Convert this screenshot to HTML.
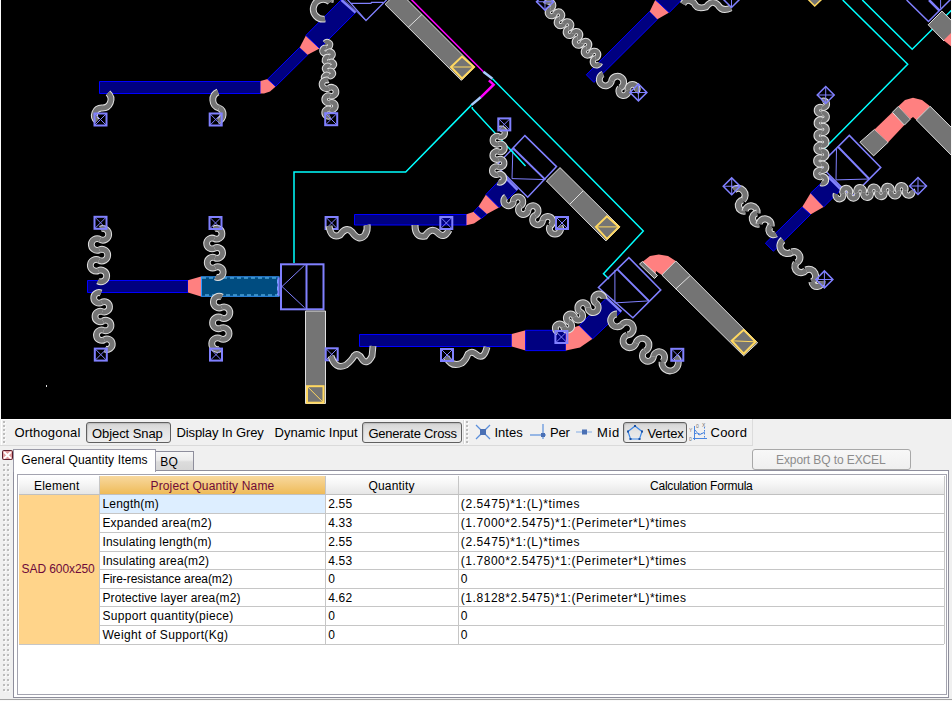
<!DOCTYPE html>
<html><head><meta charset="utf-8">
<style>
*{margin:0;padding:0;box-sizing:border-box}
html,body{width:952px;height:701px;overflow:hidden;background:#f0f0f0;font-family:"Liberation Sans",sans-serif;color:#000}
.a{position:absolute}
#cad{position:absolute;left:1px;top:0;width:950px;height:419px;background:#000;overflow:hidden}
.btn{position:absolute;border:1px solid #606060;border-radius:3px;background:linear-gradient(#d4d4d4,#e4e4e4 45%,#eeeeee);box-shadow:inset 1px 1px 1px rgba(0,0,0,0.12)}
.dot{position:absolute;width:2px;height:2px;background:#bcbcbc;box-shadow:1px 1px 0 #fafafa}
.th{position:absolute;background:linear-gradient(#ffffff,#f4f4f4 50%,#e6e6e6)}
</style></head><body>
<div id="cad"><svg width="950" height="419" viewBox="1 0 950 419"><polygon points="99.5,81.5 260.5,81.5 260.5,93.5 99.5,93.5" fill="#000080" stroke="#0000ff" stroke-width="1"/><polygon points="260.5,81.0 267.7,79.1 275.7,86.4 270.0,91.5 264.0,93.5 260.5,93.5" fill="#ff8080"/><polygon points="267.7,79.1 299.7,47.4 307.6,54.8 275.7,86.4" fill="#000080" stroke="#0000ff" stroke-width="1"/><polygon points="299.7,47.4 305.9,35.4 319.6,48.5 307.6,54.8" fill="#ff8080"/><polygon points="305.9,35.4 341.5,-0.5 355.5,12.6 319.6,48.5" fill="#000080" stroke="#0000ff" stroke-width="1"/><polyline points="341.5,0.0 355.5,12.6" fill="none" stroke="#8080ff" stroke-width="2.5"/><polyline points="346.5,-1.5 366.0,20.5 387.5,-1.0" fill="none" stroke="#8080ff" stroke-width="1.3"/><polyline points="344.0,-0.5 364.5,19.5" fill="none" stroke="#8080ff" stroke-width="0.8"/><polyline points="351.0,3.3 371.0,3.3 371.5,2.3 383.5,2.3" fill="none" stroke="#8080ff" stroke-width="1.2"/><g fill="none" stroke-linecap="butt"><path d="M108.0,93.0 A8.56,8.56 0 0 1 102.0,108.0" stroke="#e0e0e0" stroke-width="6.8"/><path d="M108.0,93.0 A8.56,8.56 0 0 1 102.0,108.0" stroke="#747474" stroke-width="4.8"/><path d="M102.0,108.0 A7.38,7.38 0 0 0 97.0,121.0" stroke="#e0e0e0" stroke-width="6.8"/><path d="M102.0,108.0 A7.38,7.38 0 0 0 97.0,121.0" stroke="#747474" stroke-width="4.8"/></g><g fill="none" stroke-linecap="butt"><path d="M218.0,92.0 A8.50,8.50 0 0 0 219.0,108.0" stroke="#e0e0e0" stroke-width="6.8"/><path d="M218.0,92.0 A8.50,8.50 0 0 0 219.0,108.0" stroke="#747474" stroke-width="4.8"/><path d="M219.0,108.0 A6.91,6.91 0 0 1 218.0,121.0" stroke="#e0e0e0" stroke-width="6.8"/><path d="M219.0,108.0 A6.91,6.91 0 0 1 218.0,121.0" stroke="#747474" stroke-width="4.8"/></g><g fill="none" stroke-linecap="butt"><path d="M325.0,43.0 A2.95,2.95 0 1 1 326.2,47.8" stroke="#e0e0e0" stroke-width="6.2"/><path d="M325.0,43.0 A2.95,2.95 0 1 1 326.2,47.8" stroke="#747474" stroke-width="4.2"/><path d="M326.2,47.8 A2.95,2.95 0 1 0 327.5,52.5" stroke="#e0e0e0" stroke-width="6.2"/><path d="M326.2,47.8 A2.95,2.95 0 1 0 327.5,52.5" stroke="#747474" stroke-width="4.2"/><path d="M327.5,52.5 A2.95,2.95 0 1 1 328.8,57.2" stroke="#e0e0e0" stroke-width="6.2"/><path d="M327.5,52.5 A2.95,2.95 0 1 1 328.8,57.2" stroke="#747474" stroke-width="4.2"/><path d="M328.8,57.2 A2.95,2.95 0 1 0 330.0,62.0" stroke="#e0e0e0" stroke-width="6.2"/><path d="M328.8,57.2 A2.95,2.95 0 1 0 330.0,62.0" stroke="#747474" stroke-width="4.2"/><path d="M330.0,62.0 A2.72,2.72 0 1 1 329.5,66.5" stroke="#e0e0e0" stroke-width="6.2"/><path d="M330.0,62.0 A2.72,2.72 0 1 1 329.5,66.5" stroke="#747474" stroke-width="4.2"/><path d="M329.5,66.5 A2.72,2.72 0 1 0 329.0,71.0" stroke="#e0e0e0" stroke-width="6.2"/><path d="M329.5,66.5 A2.72,2.72 0 1 0 329.0,71.0" stroke="#747474" stroke-width="4.2"/><path d="M329.0,71.0 A2.72,2.72 0 1 1 328.5,75.5" stroke="#e0e0e0" stroke-width="6.2"/><path d="M329.0,71.0 A2.72,2.72 0 1 1 328.5,75.5" stroke="#747474" stroke-width="4.2"/><path d="M328.5,75.5 A2.72,2.72 0 1 0 328.0,80.0" stroke="#e0e0e0" stroke-width="6.2"/><path d="M328.5,75.5 A2.72,2.72 0 1 0 328.0,80.0" stroke="#747474" stroke-width="4.2"/></g><g fill="none" stroke-linecap="butt"><path d="M328.0,80.0 A4.51,4.51 0 1 0 329.0,88.0" stroke="#e0e0e0" stroke-width="6.6"/><path d="M328.0,80.0 A4.51,4.51 0 1 0 329.0,88.0" stroke="#747474" stroke-width="4.6"/><path d="M329.0,88.0 A4.51,4.51 0 1 1 330.0,96.0" stroke="#e0e0e0" stroke-width="6.6"/><path d="M329.0,88.0 A4.51,4.51 0 1 1 330.0,96.0" stroke="#747474" stroke-width="4.6"/><path d="M330.0,96.0 A3.73,3.73 0 1 0 330.0,102.7" stroke="#e0e0e0" stroke-width="6.6"/><path d="M330.0,96.0 A3.73,3.73 0 1 0 330.0,102.7" stroke="#747474" stroke-width="4.6"/><path d="M330.0,102.7 A3.73,3.73 0 1 1 330.0,109.3" stroke="#e0e0e0" stroke-width="6.6"/><path d="M330.0,102.7 A3.73,3.73 0 1 1 330.0,109.3" stroke="#747474" stroke-width="4.6"/><path d="M330.0,109.3 A3.73,3.73 0 1 0 330.0,116.0" stroke="#e0e0e0" stroke-width="6.6"/><path d="M330.0,109.3 A3.73,3.73 0 1 0 330.0,116.0" stroke="#747474" stroke-width="4.6"/></g><g fill="none" stroke-linecap="butt"><path d="M323.0,-6.0 A6.38,6.38 0 0 1 330.0,2.0" stroke="#e0e0e0" stroke-width="6.8"/><path d="M323.0,-6.0 A6.38,6.38 0 0 1 330.0,2.0" stroke="#747474" stroke-width="4.8"/></g><g fill="none" stroke-linecap="butt"><path d="M330.0,2.0 A9.92,9.92 0 1 0 325.0,19.0" stroke="#e0e0e0" stroke-width="6.8"/><path d="M330.0,2.0 A9.92,9.92 0 1 0 325.0,19.0" stroke="#747474" stroke-width="4.8"/></g><g transform="translate(100.5,119.5) rotate(0)"><rect x="-6.0" y="-6.0" width="12" height="12" fill="none" stroke="#8080ff" stroke-width="2"/><path d="M-6.0,-6.0 L6.0,6.0 M6.0,-6.0 L-6.0,6.0" stroke="#8080ff" stroke-width="1"/></g><g transform="translate(215.7,119.5) rotate(0)"><rect x="-6.0" y="-6.0" width="12" height="12" fill="none" stroke="#8080ff" stroke-width="2"/><path d="M-6.0,-6.0 L6.0,6.0 M6.0,-6.0 L-6.0,6.0" stroke="#8080ff" stroke-width="1"/></g><g transform="translate(331.2,119.2) rotate(0)"><rect x="-6.0" y="-6.0" width="12" height="12" fill="none" stroke="#8080ff" stroke-width="2"/><path d="M-6.0,-6.0 L6.0,6.0 M6.0,-6.0 L-6.0,6.0" stroke="#8080ff" stroke-width="1"/></g><polygon points="385.1,4.3 398.5,-9.0 474.5,67.0 461.3,80.4" fill="#747474" stroke="#e0e0e0" stroke-width="1"/><polyline points="408.2,27.4 421.9,14.5" fill="none" stroke="#e0e0e0" stroke-width="1"/><polygon points="451.0,67.0 462.0,56.5 474.0,67.0 462.0,78.5" fill="none" stroke="#ffd860" stroke-width="2"/><polyline points="451.0,67.0 474.0,67.0" fill="none" stroke="#ffd860" stroke-width="1"/><polyline points="410.8,-1.0 483.4,71.8" fill="none" stroke="#ff00ff" stroke-width="1.5"/><polyline points="483.4,71.8 492.5,78.8" fill="none" stroke="#a8ccff" stroke-width="2.5"/><polyline points="488.9,80.4 493.6,84.7 480.7,97.3" fill="none" stroke="#ff00ff" stroke-width="2.5"/><polyline points="480.7,97.3 471.3,105.1" fill="none" stroke="#a8ccff" stroke-width="2.5"/><polygon points="87.5,280.5 188.0,280.5 188.0,292.5 87.5,292.5" fill="#000080" stroke="#0000ff" stroke-width="1"/><polygon points="188.0,280.3 201.0,276.6 201.0,296.4 188.0,292.6" fill="#ff8080"/><rect x="201.5" y="276.8" width="77.5" height="19.5" fill="#004c80" stroke="#3399ff" stroke-width="1"/><polyline points="202,278 277.5,278 277.5,295 202,295" fill="none" stroke="#6cc8ff" stroke-width="1" stroke-dasharray="4,3"/><polyline points="278.5,277.5 278.5,296.0" fill="none" stroke="#8080ff" stroke-width="2"/><rect x="281" y="264.3" width="42.5" height="45" fill="none" stroke="#8080ff" stroke-width="2"/><polyline points="306.5,264.0 306.5,309.0" fill="none" stroke="#8080ff" stroke-width="2"/><polyline points="304.6,265.2 282.0,286.5 304.6,307.7" fill="none" stroke="#8080ff" stroke-width="1"/><polygon points="305.5,311.0 325.5,311.0 325.5,403.5 305.5,403.5" fill="#747474" stroke="#e0e0e0" stroke-width="1"/><rect x="307" y="386.2" width="16.5" height="16.5" fill="none" stroke="#ffd860" stroke-width="2"/><polyline points="307.0,386.2 323.5,402.7" fill="none" stroke="#ffd860" stroke-width="1"/><polyline points="294.0,263.0 294.0,172.0 405.7,172.0 471.3,105.1" fill="none" stroke="#00ffff" stroke-width="1.5"/><g fill="none" stroke-linecap="butt"><path d="M100.5,229.0 A5.83,5.83 0 1 1 100.0,239.4" stroke="#e0e0e0" stroke-width="6.8"/><path d="M100.5,229.0 A5.83,5.83 0 1 1 100.0,239.4" stroke="#747474" stroke-width="4.8"/><path d="M100.0,239.4 A5.83,5.83 0 1 0 99.5,249.8" stroke="#e0e0e0" stroke-width="6.8"/><path d="M100.0,239.4 A5.83,5.83 0 1 0 99.5,249.8" stroke="#747474" stroke-width="4.8"/><path d="M99.5,249.8 A5.83,5.83 0 1 1 99.0,260.2" stroke="#e0e0e0" stroke-width="6.8"/><path d="M99.5,249.8 A5.83,5.83 0 1 1 99.0,260.2" stroke="#747474" stroke-width="4.8"/><path d="M99.0,260.2 A5.83,5.83 0 1 0 98.5,270.6" stroke="#e0e0e0" stroke-width="6.8"/><path d="M99.0,260.2 A5.83,5.83 0 1 0 98.5,270.6" stroke="#747474" stroke-width="4.8"/><path d="M98.5,270.6 A5.83,5.83 0 1 1 98.0,281.0" stroke="#e0e0e0" stroke-width="6.8"/><path d="M98.5,270.6 A5.83,5.83 0 1 1 98.0,281.0" stroke="#747474" stroke-width="4.8"/></g><g fill="none" stroke-linecap="butt"><path d="M101.0,293.0 A5.24,5.24 0 1 0 101.7,302.3" stroke="#e0e0e0" stroke-width="6.8"/><path d="M101.0,293.0 A5.24,5.24 0 1 0 101.7,302.3" stroke="#747474" stroke-width="4.8"/><path d="M101.7,302.3 A5.24,5.24 0 1 1 102.3,311.7" stroke="#e0e0e0" stroke-width="6.8"/><path d="M101.7,302.3 A5.24,5.24 0 1 1 102.3,311.7" stroke="#747474" stroke-width="4.8"/><path d="M102.3,311.7 A5.24,5.24 0 1 0 103.0,321.0" stroke="#e0e0e0" stroke-width="6.8"/><path d="M102.3,311.7 A5.24,5.24 0 1 0 103.0,321.0" stroke="#747474" stroke-width="4.8"/><path d="M103.0,321.0 A5.24,5.24 0 1 1 103.7,330.3" stroke="#e0e0e0" stroke-width="6.8"/><path d="M103.0,321.0 A5.24,5.24 0 1 1 103.7,330.3" stroke="#747474" stroke-width="4.8"/><path d="M103.7,330.3 A5.24,5.24 0 1 0 104.3,339.7" stroke="#e0e0e0" stroke-width="6.8"/><path d="M103.7,330.3 A5.24,5.24 0 1 0 104.3,339.7" stroke="#747474" stroke-width="4.8"/><path d="M104.3,339.7 A5.24,5.24 0 1 1 105.0,349.0" stroke="#e0e0e0" stroke-width="6.8"/><path d="M104.3,339.7 A5.24,5.24 0 1 1 105.0,349.0" stroke="#747474" stroke-width="4.8"/></g><g fill="none" stroke-linecap="butt"><path d="M214.0,229.0 A5.38,5.38 0 1 1 214.3,238.6" stroke="#e0e0e0" stroke-width="6.8"/><path d="M214.0,229.0 A5.38,5.38 0 1 1 214.3,238.6" stroke="#747474" stroke-width="4.8"/><path d="M214.3,238.6 A5.38,5.38 0 1 0 214.6,248.2" stroke="#e0e0e0" stroke-width="6.8"/><path d="M214.3,238.6 A5.38,5.38 0 1 0 214.6,248.2" stroke="#747474" stroke-width="4.8"/><path d="M214.6,248.2 A5.38,5.38 0 1 1 214.9,257.8" stroke="#e0e0e0" stroke-width="6.8"/><path d="M214.6,248.2 A5.38,5.38 0 1 1 214.9,257.8" stroke="#747474" stroke-width="4.8"/><path d="M214.9,257.8 A5.38,5.38 0 1 0 215.2,267.4" stroke="#e0e0e0" stroke-width="6.8"/><path d="M214.9,257.8 A5.38,5.38 0 1 0 215.2,267.4" stroke="#747474" stroke-width="4.8"/><path d="M215.2,267.4 A5.38,5.38 0 1 1 215.5,277.0" stroke="#e0e0e0" stroke-width="6.8"/><path d="M215.2,267.4 A5.38,5.38 0 1 1 215.5,277.0" stroke="#747474" stroke-width="4.8"/></g><g fill="none" stroke-linecap="butt"><path d="M222.0,297.0 A5.83,5.83 0 1 0 221.6,307.4" stroke="#e0e0e0" stroke-width="6.8"/><path d="M222.0,297.0 A5.83,5.83 0 1 0 221.6,307.4" stroke="#747474" stroke-width="4.8"/><path d="M221.6,307.4 A5.83,5.83 0 1 1 221.2,317.8" stroke="#e0e0e0" stroke-width="6.8"/><path d="M221.6,307.4 A5.83,5.83 0 1 1 221.2,317.8" stroke="#747474" stroke-width="4.8"/><path d="M221.2,317.8 A5.83,5.83 0 1 0 220.8,328.2" stroke="#e0e0e0" stroke-width="6.8"/><path d="M221.2,317.8 A5.83,5.83 0 1 0 220.8,328.2" stroke="#747474" stroke-width="4.8"/><path d="M220.8,328.2 A5.83,5.83 0 1 1 220.4,338.6" stroke="#e0e0e0" stroke-width="6.8"/><path d="M220.8,328.2 A5.83,5.83 0 1 1 220.4,338.6" stroke="#747474" stroke-width="4.8"/><path d="M220.4,338.6 A5.83,5.83 0 1 0 220.0,349.0" stroke="#e0e0e0" stroke-width="6.8"/><path d="M220.4,338.6 A5.83,5.83 0 1 0 220.0,349.0" stroke="#747474" stroke-width="4.8"/></g><g transform="translate(100.5,222.8) rotate(0)"><rect x="-6.0" y="-6.0" width="12" height="12" fill="none" stroke="#8080ff" stroke-width="2"/><path d="M-6.0,-6.0 L6.0,6.0 M6.0,-6.0 L-6.0,6.0" stroke="#8080ff" stroke-width="1"/></g><g transform="translate(100.8,354.6) rotate(0)"><rect x="-6.0" y="-6.0" width="12" height="12" fill="none" stroke="#8080ff" stroke-width="2"/><path d="M-6.0,-6.0 L6.0,6.0 M6.0,-6.0 L-6.0,6.0" stroke="#8080ff" stroke-width="1"/></g><g transform="translate(215.5,223) rotate(0)"><rect x="-6.0" y="-6.0" width="12" height="12" fill="none" stroke="#8080ff" stroke-width="2"/><path d="M-6.0,-6.0 L6.0,6.0 M6.0,-6.0 L-6.0,6.0" stroke="#8080ff" stroke-width="1"/></g><g transform="translate(216,354.6) rotate(0)"><rect x="-6.0" y="-6.0" width="12" height="12" fill="none" stroke="#8080ff" stroke-width="2"/><path d="M-6.0,-6.0 L6.0,6.0 M6.0,-6.0 L-6.0,6.0" stroke="#8080ff" stroke-width="1"/></g><g transform="translate(331.6,223) rotate(0)"><rect x="-6.0" y="-6.0" width="12" height="12" fill="none" stroke="#8080ff" stroke-width="2"/><path d="M-6.0,-6.0 L6.0,6.0 M6.0,-6.0 L-6.0,6.0" stroke="#8080ff" stroke-width="1"/></g><g transform="translate(331.7,354.3) rotate(0)"><rect x="-6.0" y="-6.0" width="12" height="12" fill="none" stroke="#8080ff" stroke-width="2"/><path d="M-6.0,-6.0 L6.0,6.0 M6.0,-6.0 L-6.0,6.0" stroke="#8080ff" stroke-width="1"/></g><polygon points="354.5,214.5 466.5,214.5 466.5,225.0 354.5,225.0" fill="#000080" stroke="#0000ff" stroke-width="1"/><polygon points="466.5,214.2 473.9,211.7 481.3,218.5 474.0,223.5 466.5,225.3" fill="#ff8080"/><polygon points="473.9,211.7 478.5,206.5 486.9,213.9 481.3,218.5" fill="#000080" stroke="#0000ff" stroke-width="1"/><polygon points="478.5,206.5 486.0,194.4 499.0,207.4 486.9,213.9" fill="#ff8080"/><polygon points="486.0,194.4 503.6,175.9 517.5,189.8 499.0,207.4" fill="#000080" stroke="#0000ff" stroke-width="1"/><polyline points="503.6,175.9 517.5,189.8" fill="none" stroke="#8080ff" stroke-width="2.5"/><polygon points="524.9,135.6 556.5,166.6 527.7,197.2 496.2,165.7" fill="none" stroke="#8080ff" stroke-width="1.5"/><polyline points="512.9,148.0 545.3,179.6" fill="none" stroke="#8080ff" stroke-width="2"/><polyline points="512.9,149.0 512.0,178.6 545.3,179.6" fill="none" stroke="#8080ff" stroke-width="1"/><polygon points="546.4,181.0 560.0,167.6 619.9,226.9 605.9,240.9" fill="#747474" stroke="#e0e0e0" stroke-width="1"/><polyline points="570.0,204.0 583.0,191.0" fill="none" stroke="#e0e0e0" stroke-width="1"/><polygon points="595.9,226.9 606.9,216.3 618.9,226.9 606.9,238.9" fill="none" stroke="#ffd860" stroke-width="2"/><polyline points="595.9,226.9 618.9,226.9" fill="none" stroke="#ffd860" stroke-width="1"/><polyline points="492.5,78.8 643.3,231.0 634.0,241.0 603.5,273.8 609.0,279.0" fill="none" stroke="#00ffff" stroke-width="1.5"/><polyline points="472.3,107.0 472.3,108.5 525.5,166.0" fill="none" stroke="#00ffff" stroke-width="1.5"/><g fill="none" stroke-linecap="butt"><path d="M499.0,129.0 A4.17,4.17 0 1 1 498.9,136.6" stroke="#e0e0e0" stroke-width="6.4"/><path d="M499.0,129.0 A4.17,4.17 0 1 1 498.9,136.6" stroke="#747474" stroke-width="4.4"/><path d="M498.9,136.6 A4.17,4.17 0 1 0 498.7,144.1" stroke="#e0e0e0" stroke-width="6.4"/><path d="M498.9,136.6 A4.17,4.17 0 1 0 498.7,144.1" stroke="#747474" stroke-width="4.4"/><path d="M498.7,144.1 A4.17,4.17 0 1 1 498.6,151.7" stroke="#e0e0e0" stroke-width="6.4"/><path d="M498.7,144.1 A4.17,4.17 0 1 1 498.6,151.7" stroke="#747474" stroke-width="4.4"/><path d="M498.6,151.7 A4.17,4.17 0 1 0 498.4,159.3" stroke="#e0e0e0" stroke-width="6.4"/><path d="M498.6,151.7 A4.17,4.17 0 1 0 498.4,159.3" stroke="#747474" stroke-width="4.4"/><path d="M498.4,159.3 A4.17,4.17 0 1 1 498.3,166.9" stroke="#e0e0e0" stroke-width="6.4"/><path d="M498.4,159.3 A4.17,4.17 0 1 1 498.3,166.9" stroke="#747474" stroke-width="4.4"/><path d="M498.3,166.9 A4.17,4.17 0 1 0 498.1,174.4" stroke="#e0e0e0" stroke-width="6.4"/><path d="M498.3,166.9 A4.17,4.17 0 1 0 498.1,174.4" stroke="#747474" stroke-width="4.4"/><path d="M498.1,174.4 A4.17,4.17 0 1 1 498.0,182.0" stroke="#e0e0e0" stroke-width="6.4"/><path d="M498.1,174.4 A4.17,4.17 0 1 1 498.0,182.0" stroke="#747474" stroke-width="4.4"/></g><g fill="none" stroke-linecap="butt"><path d="M506.0,197.0 A4.77,4.77 0 1 0 513.3,201.3" stroke="#e0e0e0" stroke-width="6.8"/><path d="M506.0,197.0 A4.77,4.77 0 1 0 513.3,201.3" stroke="#747474" stroke-width="4.8"/><path d="M513.3,201.3 A4.77,4.77 0 1 1 520.7,205.7" stroke="#e0e0e0" stroke-width="6.8"/><path d="M513.3,201.3 A4.77,4.77 0 1 1 520.7,205.7" stroke="#747474" stroke-width="4.8"/><path d="M520.7,205.7 A4.77,4.77 0 1 0 528.0,210.0" stroke="#e0e0e0" stroke-width="6.8"/><path d="M520.7,205.7 A4.77,4.77 0 1 0 528.0,210.0" stroke="#747474" stroke-width="4.8"/><path d="M528.0,210.0 A5.08,5.08 0 1 1 535.3,215.3" stroke="#e0e0e0" stroke-width="6.8"/><path d="M528.0,210.0 A5.08,5.08 0 1 1 535.3,215.3" stroke="#747474" stroke-width="4.8"/><path d="M535.3,215.3 A5.08,5.08 0 1 0 542.7,220.7" stroke="#e0e0e0" stroke-width="6.8"/><path d="M535.3,215.3 A5.08,5.08 0 1 0 542.7,220.7" stroke="#747474" stroke-width="4.8"/><path d="M542.7,220.7 A5.08,5.08 0 1 1 550.0,226.0" stroke="#e0e0e0" stroke-width="6.8"/><path d="M542.7,220.7 A5.08,5.08 0 1 1 550.0,226.0" stroke="#747474" stroke-width="4.8"/><path d="M550.0,226.0 A5.60,5.60 0 1 0 560.0,226.0" stroke="#e0e0e0" stroke-width="6.8"/><path d="M550.0,226.0 A5.60,5.60 0 1 0 560.0,226.0" stroke="#747474" stroke-width="4.8"/></g><path d="M329,226 Q331,239 340,235 Q346,226 352,232 Q359,242 365,235 Q368,230 367,225" fill="none" stroke="#e0e0e0" stroke-width="7"/><path d="M329,226 Q331,239 340,235 Q346,226 352,232 Q359,242 365,235 Q368,230 367,225" fill="none" stroke="#747474" stroke-width="5"/><path d="M415,225 Q415,238 425,236 Q431,227 437,232 Q444,240 449,230" fill="none" stroke="#e0e0e0" stroke-width="7"/><path d="M415,225 Q415,238 425,236 Q431,227 437,232 Q444,240 449,230" fill="none" stroke="#747474" stroke-width="5"/><g transform="translate(504.3,124.4) rotate(0)"><rect x="-6.0" y="-6.0" width="12" height="12" fill="none" stroke="#8080ff" stroke-width="2"/><path d="M-6.0,-6.0 L6.0,6.0 M6.0,-6.0 L-6.0,6.0" stroke="#8080ff" stroke-width="1"/></g><g transform="translate(562,223) rotate(0)"><rect x="-6.0" y="-6.0" width="12" height="12" fill="none" stroke="#8080ff" stroke-width="2"/><path d="M-6.0,-6.0 L6.0,6.0 M6.0,-6.0 L-6.0,6.0" stroke="#8080ff" stroke-width="1"/></g><g transform="translate(446.3,223) rotate(0)"><rect x="-6.0" y="-6.0" width="12" height="12" fill="none" stroke="#8080ff" stroke-width="2"/><path d="M-6.0,-6.0 L6.0,6.0 M6.0,-6.0 L-6.0,6.0" stroke="#8080ff" stroke-width="1"/></g><polygon points="359.5,334.5 511.8,334.5 511.8,346.5 359.5,346.5" fill="#000080" stroke="#0000ff" stroke-width="1"/><polygon points="511.8,334.1 525.6,330.3 525.6,350.6 511.8,346.5" fill="#ff8080"/><polygon points="525.6,330.3 565.9,330.3 565.9,350.6 525.6,350.6" fill="#000080" stroke="#0000ff" stroke-width="1"/><polygon points="565.9,330.3 579.4,325.6 592.6,338.8 580.0,347.5 565.9,350.6" fill="#ff8080"/><polygon points="579.4,325.6 606.6,297.9 621.3,311.6 592.6,338.8" fill="#000080" stroke="#0000ff" stroke-width="1"/><polyline points="606.6,297.9 621.3,311.6" fill="none" stroke="#8080ff" stroke-width="2.5"/><polygon points="628.9,257.6 660.8,289.9 632.9,317.8 598.4,287.5" fill="none" stroke="#8080ff" stroke-width="1.5"/><polyline points="616.9,268.9 648.9,300.9" fill="none" stroke="#8080ff" stroke-width="2"/><polyline points="614.9,270.0 614.9,302.9 648.9,300.9" fill="none" stroke="#8080ff" stroke-width="1"/><polygon points="641.0,263.0 650.0,256.0 658.8,254.4 668.0,256.0 675.8,261.0 661.8,275.0 656.0,271.0 654.9,277.9" fill="#ff8080"/><polygon points="639.5,264.0 642.5,261.5 657.5,275.5 654.5,278.5" fill="#747474" stroke="#e0e0e0" stroke-width="1"/><polygon points="675.8,261.0 757.6,342.8 743.7,355.8 661.8,275.0" fill="#747474" stroke="#e0e0e0" stroke-width="1"/><polyline points="689.8,276.0 675.8,288.9" fill="none" stroke="#e0e0e0" stroke-width="1"/><polygon points="731.7,340.8 743.7,329.8 755.6,341.8 743.7,353.8" fill="none" stroke="#ffd860" stroke-width="2"/><polyline points="731.7,340.8 755.6,341.8" fill="none" stroke="#ffd860" stroke-width="1"/><path d="M331,356 Q335,370 346,365 Q352,360 354,356 Q358,352 362,359 Q367,366 372,356 L373,346" fill="none" stroke="#e0e0e0" stroke-width="6.8"/><path d="M331,356 Q335,370 346,365 Q352,360 354,356 Q358,352 362,359 Q367,366 372,356 L373,346" fill="none" stroke="#747474" stroke-width="4.8"/><path d="M446,357 Q452,368 462,363 Q466,360 468,354 Q472,350 477,355 Q484,360 487,347" fill="none" stroke="#e0e0e0" stroke-width="6.8"/><path d="M446,357 Q452,368 462,363 Q466,360 468,354 Q472,350 477,355 Q484,360 487,347" fill="none" stroke="#747474" stroke-width="4.8"/><g fill="none" stroke-linecap="butt"><path d="M558.0,332.0 A4.16,4.16 0 1 1 563.5,327.0" stroke="#e0e0e0" stroke-width="6.8"/><path d="M558.0,332.0 A4.16,4.16 0 1 1 563.5,327.0" stroke="#747474" stroke-width="4.8"/><path d="M563.5,327.0 A4.16,4.16 0 1 0 569.0,322.0" stroke="#e0e0e0" stroke-width="6.8"/><path d="M563.5,327.0 A4.16,4.16 0 1 0 569.0,322.0" stroke="#747474" stroke-width="4.8"/><path d="M569.0,322.0 A4.16,4.16 0 1 1 574.5,317.0" stroke="#e0e0e0" stroke-width="6.8"/><path d="M569.0,322.0 A4.16,4.16 0 1 1 574.5,317.0" stroke="#747474" stroke-width="4.8"/><path d="M574.5,317.0 A4.16,4.16 0 1 0 580.0,312.0" stroke="#e0e0e0" stroke-width="6.8"/><path d="M574.5,317.0 A4.16,4.16 0 1 0 580.0,312.0" stroke="#747474" stroke-width="4.8"/><path d="M580.0,312.0 A5.10,5.10 0 1 1 588.0,307.7" stroke="#e0e0e0" stroke-width="6.8"/><path d="M580.0,312.0 A5.10,5.10 0 1 1 588.0,307.7" stroke="#747474" stroke-width="4.8"/><path d="M588.0,307.7 A5.10,5.10 0 1 0 596.0,303.3" stroke="#e0e0e0" stroke-width="6.8"/><path d="M588.0,307.7 A5.10,5.10 0 1 0 596.0,303.3" stroke="#747474" stroke-width="4.8"/><path d="M596.0,303.3 A5.10,5.10 0 1 1 604.0,299.0" stroke="#e0e0e0" stroke-width="6.8"/><path d="M596.0,303.3 A5.10,5.10 0 1 1 604.0,299.0" stroke="#747474" stroke-width="4.8"/></g><g fill="none" stroke-linecap="butt"><path d="M617.0,314.0 A6.40,6.40 0 1 0 622.0,324.5" stroke="#e0e0e0" stroke-width="6.8"/><path d="M617.0,314.0 A6.40,6.40 0 1 0 622.0,324.5" stroke="#747474" stroke-width="4.8"/><path d="M622.0,324.5 A6.40,6.40 0 1 1 627.0,335.0" stroke="#e0e0e0" stroke-width="6.8"/><path d="M622.0,324.5 A6.40,6.40 0 1 1 627.0,335.0" stroke="#747474" stroke-width="4.8"/><path d="M627.0,335.0 A6.62,6.62 0 1 0 636.0,343.0" stroke="#e0e0e0" stroke-width="6.8"/><path d="M627.0,335.0 A6.62,6.62 0 1 0 636.0,343.0" stroke="#747474" stroke-width="4.8"/><path d="M636.0,343.0 A6.62,6.62 0 1 1 645.0,351.0" stroke="#e0e0e0" stroke-width="6.8"/><path d="M636.0,343.0 A6.62,6.62 0 1 1 645.0,351.0" stroke="#747474" stroke-width="4.8"/><path d="M645.0,351.0 A5.57,5.57 0 1 0 653.5,356.5" stroke="#e0e0e0" stroke-width="6.8"/><path d="M645.0,351.0 A5.57,5.57 0 1 0 653.5,356.5" stroke="#747474" stroke-width="4.8"/><path d="M653.5,356.5 A5.57,5.57 0 1 1 662.0,362.0" stroke="#e0e0e0" stroke-width="6.8"/><path d="M653.5,356.5 A5.57,5.57 0 1 1 662.0,362.0" stroke="#747474" stroke-width="4.8"/><path d="M662.0,362.0 A8.18,8.18 0 1 0 676.0,357.0" stroke="#e0e0e0" stroke-width="6.8"/><path d="M662.0,362.0 A8.18,8.18 0 1 0 676.0,357.0" stroke="#747474" stroke-width="4.8"/></g><g transform="translate(561.4,337) rotate(0)"><rect x="-6.0" y="-6.0" width="12" height="12" fill="none" stroke="#8080ff" stroke-width="2"/><path d="M-6.0,-6.0 L6.0,6.0 M6.0,-6.0 L-6.0,6.0" stroke="#8080ff" stroke-width="1"/></g><g transform="translate(677.3,354.8) rotate(0)"><rect x="-6.0" y="-6.0" width="12" height="12" fill="none" stroke="#8080ff" stroke-width="2"/><path d="M-6.0,-6.0 L6.0,6.0 M6.0,-6.0 L-6.0,6.0" stroke="#8080ff" stroke-width="1"/></g><g transform="translate(447,355) rotate(0)"><rect x="-6.0" y="-6.0" width="12" height="12" fill="none" stroke="#8080ff" stroke-width="2"/><path d="M-6.0,-6.0 L6.0,6.0 M6.0,-6.0 L-6.0,6.0" stroke="#8080ff" stroke-width="1"/></g><polygon points="586.3,74.8 649.7,11.4 657.4,19.3 593.9,82.4" fill="#000080" stroke="#0000ff" stroke-width="1"/><polygon points="649.7,11.4 655.2,0.0 669.2,12.6 657.4,19.3" fill="#ff8080"/><polygon points="655.2,-0.5 682.0,-0.5 669.2,12.6" fill="#000080" stroke="#0000ff" stroke-width="1"/><g fill="none" stroke-linecap="butt"><path d="M546.0,4.0 A3.73,3.73 0 1 1 550.5,8.9" stroke="#e0e0e0" stroke-width="6.2"/><path d="M546.0,4.0 A3.73,3.73 0 1 1 550.5,8.9" stroke="#747474" stroke-width="4.2"/><path d="M550.5,8.9 A3.73,3.73 0 1 0 555.0,13.8" stroke="#e0e0e0" stroke-width="6.2"/><path d="M550.5,8.9 A3.73,3.73 0 1 0 555.0,13.8" stroke="#747474" stroke-width="4.2"/><path d="M555.0,13.8 A3.73,3.73 0 1 1 559.5,18.8" stroke="#e0e0e0" stroke-width="6.2"/><path d="M555.0,13.8 A3.73,3.73 0 1 1 559.5,18.8" stroke="#747474" stroke-width="4.2"/><path d="M559.5,18.8 A3.73,3.73 0 1 0 564.0,23.7" stroke="#e0e0e0" stroke-width="6.2"/><path d="M559.5,18.8 A3.73,3.73 0 1 0 564.0,23.7" stroke="#747474" stroke-width="4.2"/><path d="M564.0,23.7 A3.73,3.73 0 1 1 568.5,28.6" stroke="#e0e0e0" stroke-width="6.2"/><path d="M564.0,23.7 A3.73,3.73 0 1 1 568.5,28.6" stroke="#747474" stroke-width="4.2"/><path d="M568.5,28.6 A3.73,3.73 0 1 0 573.0,33.5" stroke="#e0e0e0" stroke-width="6.2"/><path d="M568.5,28.6 A3.73,3.73 0 1 0 573.0,33.5" stroke="#747474" stroke-width="4.2"/><path d="M573.0,33.5 A3.73,3.73 0 1 1 577.5,38.4" stroke="#e0e0e0" stroke-width="6.2"/><path d="M573.0,33.5 A3.73,3.73 0 1 1 577.5,38.4" stroke="#747474" stroke-width="4.2"/><path d="M577.5,38.4 A3.73,3.73 0 1 0 582.0,43.3" stroke="#e0e0e0" stroke-width="6.2"/><path d="M577.5,38.4 A3.73,3.73 0 1 0 582.0,43.3" stroke="#747474" stroke-width="4.2"/><path d="M582.0,43.3 A3.73,3.73 0 1 1 586.5,48.2" stroke="#e0e0e0" stroke-width="6.2"/><path d="M582.0,43.3 A3.73,3.73 0 1 1 586.5,48.2" stroke="#747474" stroke-width="4.2"/><path d="M586.5,48.2 A3.73,3.73 0 1 0 591.0,53.2" stroke="#e0e0e0" stroke-width="6.2"/><path d="M586.5,48.2 A3.73,3.73 0 1 0 591.0,53.2" stroke="#747474" stroke-width="4.2"/><path d="M591.0,53.2 A3.73,3.73 0 1 1 595.5,58.1" stroke="#e0e0e0" stroke-width="6.2"/><path d="M591.0,53.2 A3.73,3.73 0 1 1 595.5,58.1" stroke="#747474" stroke-width="4.2"/><path d="M595.5,58.1 A3.73,3.73 0 1 0 600.0,63.0" stroke="#e0e0e0" stroke-width="6.2"/><path d="M595.5,58.1 A3.73,3.73 0 1 0 600.0,63.0" stroke="#747474" stroke-width="4.2"/></g><g fill="none" stroke-linecap="butt"><path d="M603.0,74.0 A6.17,6.17 0 1 0 611.5,81.0" stroke="#e0e0e0" stroke-width="6.8"/><path d="M603.0,74.0 A6.17,6.17 0 1 0 611.5,81.0" stroke="#747474" stroke-width="4.8"/><path d="M611.5,81.0 A6.17,6.17 0 1 1 620.0,88.0" stroke="#e0e0e0" stroke-width="6.8"/><path d="M611.5,81.0 A6.17,6.17 0 1 1 620.0,88.0" stroke="#747474" stroke-width="4.8"/><path d="M620.0,88.0 A4.62,4.62 0 1 0 628.0,90.0" stroke="#e0e0e0" stroke-width="6.8"/><path d="M620.0,88.0 A4.62,4.62 0 1 0 628.0,90.0" stroke="#747474" stroke-width="4.8"/><path d="M628.0,90.0 A4.62,4.62 0 1 1 636.0,92.0" stroke="#e0e0e0" stroke-width="6.8"/><path d="M628.0,90.0 A4.62,4.62 0 1 1 636.0,92.0" stroke="#747474" stroke-width="4.8"/></g><path d="M683,4 Q687,-3 694,3 Q697,10 706,7 Q712,-1 718,5 Q722,12 731,8" fill="none" stroke="#e0e0e0" stroke-width="6.8"/><path d="M683,4 Q687,-3 694,3 Q697,10 706,7 Q712,-1 718,5 Q722,12 731,8" fill="none" stroke="#747474" stroke-width="4.8"/><g transform="translate(545,1.7) rotate(45)"><rect x="-6.0" y="-6.0" width="12" height="12" fill="none" stroke="#8080ff" stroke-width="1.5"/><path d="M-6.0,-6.0 L6.0,6.0 M6.0,-6.0 L-6.0,6.0" stroke="#8080ff" stroke-width="1"/></g><g transform="translate(638.4,92.4) rotate(45)"><rect x="-6.0" y="-6.0" width="12" height="12" fill="none" stroke="#8080ff" stroke-width="1.5"/><path d="M-6.0,-6.0 L6.0,6.0 M6.0,-6.0 L-6.0,6.0" stroke="#8080ff" stroke-width="1"/></g><g transform="translate(731.5,-1) rotate(45)"><rect x="-6.0" y="-6.0" width="12" height="12" fill="none" stroke="#8080ff" stroke-width="1.5"/><path d="M-6.0,-6.0 L6.0,6.0 M6.0,-6.0 L-6.0,6.0" stroke="#8080ff" stroke-width="1"/></g><polygon points="807.8,-1.0 814.7,6.0 822.0,-1.0" fill="#747474" stroke="#ffd860" stroke-width="1.5"/><polyline points="842.7,0.0 907.7,64.3 822.3,150.8 828.2,156.8" fill="none" stroke="#00ffff" stroke-width="1.5"/><polyline points="862.3,0.0 912.2,49.3 951.6,10.2" fill="none" stroke="#00ffff" stroke-width="1.5"/><polyline points="906.6,0.0 928.5,21.5 952.0,-2.0" fill="none" stroke="#8080ff" stroke-width="1.5"/><polyline points="929.0,0.0 939.3,10.3" fill="none" stroke="#8080ff" stroke-width="2.5"/><polyline points="940.6,0.0 940.6,8.5" fill="none" stroke="#8080ff" stroke-width="1"/><polygon points="928.2,24.8 941.9,11.1 958.0,27.0 944.0,41.0" fill="#747474" stroke="#e0e0e0" stroke-width="1"/><polygon points="943.6,40.2 952.0,32.0 952.0,47.0" fill="#ff8080"/><polygon points="849.3,135.4 880.8,167.4 851.4,197.0 819.7,165.3" fill="none" stroke="#8080ff" stroke-width="1.5"/><polyline points="837.7,146.5 869.3,179.0" fill="none" stroke="#8080ff" stroke-width="2"/><polyline points="836.5,148.0 836.0,179.9 869.3,179.0" fill="none" stroke="#8080ff" stroke-width="1"/><polygon points="859.9,142.2 874.5,129.4 888.2,142.2 873.6,155.9" fill="#747474" stroke="#e0e0e0" stroke-width="1"/><polygon points="874.5,129.4 892.4,112.3 904.4,125.1 888.2,142.2" fill="#ff8080"/><polygon points="892.4,112.3 898.4,106.3 910.4,119.1 904.4,125.1" fill="#747474" stroke="#e0e0e0" stroke-width="1"/><polygon points="898.4,106.3 905.0,100.0 913.0,97.7 922.0,100.0 930.1,106.3 916.4,120.0 913.0,117.0 910.4,119.1" fill="#ff8080"/><polygon points="930.1,106.3 960.0,136.0 960.0,164.0 916.4,120.0" fill="#747474" stroke="#e0e0e0" stroke-width="1"/><polygon points="828.1,176.5 841.1,189.5 823.5,207.1 810.5,193.2" fill="#000080" stroke="#0000ff" stroke-width="1"/><polyline points="828.1,176.5 841.1,189.5" fill="none" stroke="#8080ff" stroke-width="2.5"/><polygon points="810.5,193.2 823.5,207.1 810.5,214.5 802.2,207.1" fill="#ff8080"/><polygon points="802.2,207.1 810.5,214.5 773.4,251.2 765.4,243.2" fill="#000080" stroke="#0000ff" stroke-width="1"/><g fill="none" stroke-linecap="butt"><path d="M822.0,101.0 A3.47,3.47 0 1 1 821.9,107.3" stroke="#e0e0e0" stroke-width="6.4"/><path d="M822.0,101.0 A3.47,3.47 0 1 1 821.9,107.3" stroke="#747474" stroke-width="4.4"/><path d="M821.9,107.3 A3.47,3.47 0 1 0 821.8,113.6" stroke="#e0e0e0" stroke-width="6.4"/><path d="M821.9,107.3 A3.47,3.47 0 1 0 821.8,113.6" stroke="#747474" stroke-width="4.4"/><path d="M821.8,113.6 A3.47,3.47 0 1 1 821.8,119.9" stroke="#e0e0e0" stroke-width="6.4"/><path d="M821.8,113.6 A3.47,3.47 0 1 1 821.8,119.9" stroke="#747474" stroke-width="4.4"/><path d="M821.8,119.9 A3.47,3.47 0 1 0 821.7,126.2" stroke="#e0e0e0" stroke-width="6.4"/><path d="M821.8,119.9 A3.47,3.47 0 1 0 821.7,126.2" stroke="#747474" stroke-width="4.4"/><path d="M821.7,126.2 A3.47,3.47 0 1 1 821.6,132.5" stroke="#e0e0e0" stroke-width="6.4"/><path d="M821.7,126.2 A3.47,3.47 0 1 1 821.6,132.5" stroke="#747474" stroke-width="4.4"/><path d="M821.6,132.5 A3.47,3.47 0 1 0 821.5,138.8" stroke="#e0e0e0" stroke-width="6.4"/><path d="M821.6,132.5 A3.47,3.47 0 1 0 821.5,138.8" stroke="#747474" stroke-width="4.4"/><path d="M821.5,138.8 A3.47,3.47 0 1 1 821.5,145.2" stroke="#e0e0e0" stroke-width="6.4"/><path d="M821.5,138.8 A3.47,3.47 0 1 1 821.5,145.2" stroke="#747474" stroke-width="4.4"/><path d="M821.5,145.2 A3.47,3.47 0 1 0 821.4,151.5" stroke="#e0e0e0" stroke-width="6.4"/><path d="M821.5,145.2 A3.47,3.47 0 1 0 821.4,151.5" stroke="#747474" stroke-width="4.4"/><path d="M821.4,151.5 A3.47,3.47 0 1 1 821.3,157.8" stroke="#e0e0e0" stroke-width="6.4"/><path d="M821.4,151.5 A3.47,3.47 0 1 1 821.3,157.8" stroke="#747474" stroke-width="4.4"/><path d="M821.3,157.8 A3.47,3.47 0 1 0 821.2,164.1" stroke="#e0e0e0" stroke-width="6.4"/><path d="M821.3,157.8 A3.47,3.47 0 1 0 821.2,164.1" stroke="#747474" stroke-width="4.4"/><path d="M821.2,164.1 A3.47,3.47 0 1 1 821.2,170.4" stroke="#e0e0e0" stroke-width="6.4"/><path d="M821.2,164.1 A3.47,3.47 0 1 1 821.2,170.4" stroke="#747474" stroke-width="4.4"/><path d="M821.2,170.4 A3.47,3.47 0 1 0 821.1,176.7" stroke="#e0e0e0" stroke-width="6.4"/><path d="M821.2,170.4 A3.47,3.47 0 1 0 821.1,176.7" stroke="#747474" stroke-width="4.4"/><path d="M821.1,176.7 A3.47,3.47 0 1 1 821.0,183.0" stroke="#e0e0e0" stroke-width="6.4"/><path d="M821.1,176.7 A3.47,3.47 0 1 1 821.0,183.0" stroke="#747474" stroke-width="4.4"/></g><g fill="none" stroke-linecap="butt"><path d="M836.0,194.0 A3.81,3.81 0 1 0 842.9,193.6" stroke="#e0e0e0" stroke-width="6.4"/><path d="M836.0,194.0 A3.81,3.81 0 1 0 842.9,193.6" stroke="#747474" stroke-width="4.4"/><path d="M842.9,193.6 A3.81,3.81 0 1 1 849.8,193.3" stroke="#e0e0e0" stroke-width="6.4"/><path d="M842.9,193.6 A3.81,3.81 0 1 1 849.8,193.3" stroke="#747474" stroke-width="4.4"/><path d="M849.8,193.3 A3.81,3.81 0 1 0 856.7,192.9" stroke="#e0e0e0" stroke-width="6.4"/><path d="M849.8,193.3 A3.81,3.81 0 1 0 856.7,192.9" stroke="#747474" stroke-width="4.4"/><path d="M856.7,192.9 A3.81,3.81 0 1 1 863.6,192.5" stroke="#e0e0e0" stroke-width="6.4"/><path d="M856.7,192.9 A3.81,3.81 0 1 1 863.6,192.5" stroke="#747474" stroke-width="4.4"/><path d="M863.6,192.5 A3.81,3.81 0 1 0 870.5,192.2" stroke="#e0e0e0" stroke-width="6.4"/><path d="M863.6,192.5 A3.81,3.81 0 1 0 870.5,192.2" stroke="#747474" stroke-width="4.4"/><path d="M870.5,192.2 A3.81,3.81 0 1 1 877.5,191.8" stroke="#e0e0e0" stroke-width="6.4"/><path d="M870.5,192.2 A3.81,3.81 0 1 1 877.5,191.8" stroke="#747474" stroke-width="4.4"/><path d="M877.5,191.8 A3.81,3.81 0 1 0 884.4,191.5" stroke="#e0e0e0" stroke-width="6.4"/><path d="M877.5,191.8 A3.81,3.81 0 1 0 884.4,191.5" stroke="#747474" stroke-width="4.4"/><path d="M884.4,191.5 A3.81,3.81 0 1 1 891.3,191.1" stroke="#e0e0e0" stroke-width="6.4"/><path d="M884.4,191.5 A3.81,3.81 0 1 1 891.3,191.1" stroke="#747474" stroke-width="4.4"/><path d="M891.3,191.1 A3.81,3.81 0 1 0 898.2,190.7" stroke="#e0e0e0" stroke-width="6.4"/><path d="M891.3,191.1 A3.81,3.81 0 1 0 898.2,190.7" stroke="#747474" stroke-width="4.4"/><path d="M898.2,190.7 A3.81,3.81 0 1 1 905.1,190.4" stroke="#e0e0e0" stroke-width="6.4"/><path d="M898.2,190.7 A3.81,3.81 0 1 1 905.1,190.4" stroke="#747474" stroke-width="4.4"/><path d="M905.1,190.4 A3.81,3.81 0 1 0 912.0,190.0" stroke="#e0e0e0" stroke-width="6.4"/><path d="M905.1,190.4 A3.81,3.81 0 1 0 912.0,190.0" stroke="#747474" stroke-width="4.4"/></g><g fill="none" stroke-linecap="butt"><path d="M734.0,190.0 A6.73,6.73 0 0 1 743.0,200.0" stroke="#e0e0e0" stroke-width="7.2"/><path d="M734.0,190.0 A6.73,6.73 0 0 1 743.0,200.0" stroke="#747474" stroke-width="5.2"/><path d="M743.0,200.0 A5.59,5.59 0 0 0 745.0,211.0" stroke="#e0e0e0" stroke-width="7.2"/><path d="M743.0,200.0 A5.59,5.59 0 0 0 745.0,211.0" stroke="#747474" stroke-width="5.2"/><path d="M745.0,211.0 A6.08,6.08 0 0 1 757.0,213.0" stroke="#e0e0e0" stroke-width="7.2"/><path d="M745.0,211.0 A6.08,6.08 0 0 1 757.0,213.0" stroke="#747474" stroke-width="5.2"/><path d="M757.0,213.0 A5.59,5.59 0 0 0 759.0,224.0" stroke="#e0e0e0" stroke-width="7.2"/><path d="M757.0,213.0 A5.59,5.59 0 0 0 759.0,224.0" stroke="#747474" stroke-width="5.2"/><path d="M759.0,224.0 A6.08,6.08 0 0 1 771.0,226.0" stroke="#e0e0e0" stroke-width="7.2"/><path d="M759.0,224.0 A6.08,6.08 0 0 1 771.0,226.0" stroke="#747474" stroke-width="5.2"/><path d="M771.0,226.0 A4.72,4.72 0 0 0 776.0,234.0" stroke="#e0e0e0" stroke-width="7.2"/><path d="M771.0,226.0 A4.72,4.72 0 0 0 776.0,234.0" stroke="#747474" stroke-width="5.2"/></g><g fill="none" stroke-linecap="butt"><path d="M783.0,240.0 A7.50,7.50 0 0 0 792.0,252.0" stroke="#e0e0e0" stroke-width="7.2"/><path d="M783.0,240.0 A7.50,7.50 0 0 0 792.0,252.0" stroke="#747474" stroke-width="5.2"/><path d="M792.0,252.0 A5.85,5.85 0 0 1 796.0,263.0" stroke="#e0e0e0" stroke-width="7.2"/><path d="M792.0,252.0 A5.85,5.85 0 0 1 796.0,263.0" stroke="#747474" stroke-width="5.2"/><path d="M796.0,263.0 A6.10,6.10 0 0 0 806.0,270.0" stroke="#e0e0e0" stroke-width="7.2"/><path d="M796.0,263.0 A6.10,6.10 0 0 0 806.0,270.0" stroke="#747474" stroke-width="5.2"/><path d="M806.0,270.0 A6.71,6.71 0 0 1 812.0,282.0" stroke="#e0e0e0" stroke-width="7.2"/><path d="M806.0,270.0 A6.71,6.71 0 0 1 812.0,282.0" stroke="#747474" stroke-width="5.2"/><path d="M812.0,282.0 A5.02,5.02 0 0 0 822.0,281.0" stroke="#e0e0e0" stroke-width="7.2"/><path d="M812.0,282.0 A5.02,5.02 0 0 0 822.0,281.0" stroke="#747474" stroke-width="5.2"/></g><g transform="translate(825.7,95) rotate(45)"><rect x="-6.0" y="-6.0" width="12" height="12" fill="none" stroke="#8080ff" stroke-width="1.5"/><path d="M-6.0,-6.0 L6.0,6.0 M6.0,-6.0 L-6.0,6.0" stroke="#8080ff" stroke-width="1"/></g><g transform="translate(918,186) rotate(45)"><rect x="-6.0" y="-6.0" width="12" height="12" fill="none" stroke="#8080ff" stroke-width="1.5"/><path d="M-6.0,-6.0 L6.0,6.0 M6.0,-6.0 L-6.0,6.0" stroke="#8080ff" stroke-width="1"/></g><g transform="translate(731.7,186.3) rotate(45)"><rect x="-6.0" y="-6.0" width="12" height="12" fill="none" stroke="#8080ff" stroke-width="1.5"/><path d="M-6.0,-6.0 L6.0,6.0 M6.0,-6.0 L-6.0,6.0" stroke="#8080ff" stroke-width="1"/></g><g transform="translate(824.4,279.4) rotate(45)"><rect x="-6.0" y="-6.0" width="12" height="12" fill="none" stroke="#8080ff" stroke-width="1.5"/><path d="M-6.0,-6.0 L6.0,6.0 M6.0,-6.0 L-6.0,6.0" stroke="#8080ff" stroke-width="1"/></g><rect x="46" y="385" width="1" height="2" fill="#e0e0e0"/></svg></div>

<div class="a" style="left:1px;top:419px;width:752px;height:26px;background:#f0f0f0;border-top:1px solid #fff;border-left:1px solid #fff"></div>
<div class="a" style="left:0;top:445px;width:753px;height:1px;background:#dadada"></div>
<div class="a" style="left:752px;top:419px;width:1px;height:26px;background:#dcdcdc"></div>
<div class="dot" style="left:3px;top:421px"></div>
<div class="dot" style="left:3px;top:425px"></div>
<div class="dot" style="left:3px;top:429px"></div>
<div class="dot" style="left:3px;top:433px"></div>
<div class="dot" style="left:3px;top:437px"></div>
<div class="dot" style="left:3px;top:441px"></div>
<div class="dot" style="left:466px;top:421px"></div>
<div class="dot" style="left:466px;top:425px"></div>
<div class="dot" style="left:466px;top:429px"></div>
<div class="dot" style="left:466px;top:433px"></div>
<div class="dot" style="left:466px;top:437px"></div>
<div class="dot" style="left:466px;top:441px"></div>
<div class="a" style="left:463px;top:420px;width:1px;height:24px;background:#d8d8d8"></div>
<div class="a" style="left:464px;top:420px;width:1px;height:24px;background:#fff"></div>
<div class="a" style="left:14.5px;top:425.00px;font-size:13px;line-height:16px;letter-spacing:0.17px;color:#000;white-space:nowrap">Orthogonal</div>
<div class="btn" style="left:86px;top:422px;width:85px;height:21px"></div>
<div class="a" style="left:92px;top:425.70px;font-size:13px;line-height:16px;letter-spacing:-0.07px;color:#000;white-space:nowrap">Object Snap</div>
<div class="a" style="left:176.5px;top:425.00px;font-size:13px;line-height:16px;letter-spacing:-0.11px;color:#000;white-space:nowrap">Display In Grey</div>
<div class="a" style="left:274.5px;top:425.00px;font-size:13px;line-height:16px;letter-spacing:0.01px;color:#000;white-space:nowrap">Dynamic Input</div>
<div class="btn" style="left:362px;top:422px;width:100px;height:21px"></div>
<div class="a" style="left:368.5px;top:425.70px;font-size:13px;line-height:16px;letter-spacing:-0.26px;color:#000;white-space:nowrap">Generate Cross</div>
<svg class="a" style="left:474px;top:424px" width="18" height="16"><g stroke="#5a8fdc" stroke-width="1.2"><line x1="2" y1="1" x2="16" y2="15"/><line x1="16" y1="1" x2="2" y2="15"/></g><rect x="6" y="5" width="6" height="6" fill="#4a70b4"/></svg>
<div class="a" style="left:494.5px;top:425.00px;font-size:13px;line-height:16px;letter-spacing:0px;color:#000;white-space:nowrap">Intes</div>
<svg class="a" style="left:529px;top:423px" width="18" height="17"><g stroke="#5a8fdc" stroke-width="1.2"><line x1="1" y1="12" x2="17" y2="12"/><line x1="14" y1="1" x2="14" y2="16"/></g><rect x="12" y="10" width="4" height="4" fill="#4a70b4"/></svg>
<div class="a" style="left:550px;top:425.00px;font-size:13px;line-height:16px;letter-spacing:-0.2px;color:#000;white-space:nowrap">Per</div>
<svg class="a" style="left:575px;top:424px" width="18" height="16"><line x1="1" y1="8" x2="17" y2="8" stroke="#a8c4ea" stroke-width="1.5"/><rect x="7" y="5.5" width="5" height="5" fill="#4a70b4"/></svg>
<div class="a" style="left:597px;top:425.00px;font-size:13px;line-height:16px;letter-spacing:0.6px;color:#000;white-space:nowrap">Mid</div>
<div class="btn" style="left:623px;top:422px;width:64px;height:21px"></div>
<svg class="a" style="left:626px;top:424px" width="18" height="17"><polygon points="9,2 16,7.5 13.5,15 4.5,15 2,7.5" fill="none" stroke="#3a86e8" stroke-width="1.2"/><g fill="#1a4fa0"><rect x="8" y="1" width="2" height="2"/><rect x="15" y="6.5" width="2" height="2"/><rect x="12.5" y="14" width="2" height="2"/><rect x="3.5" y="14" width="2" height="2"/><rect x="1" y="6.5" width="2" height="2"/></g></svg>
<div class="a" style="left:647.5px;top:425.70px;font-size:13px;line-height:16px;letter-spacing:-0.1px;color:#000;white-space:nowrap">Vertex</div>
<svg class="a" style="left:689px;top:423px" width="19" height="18"><g stroke="#4a86e0" stroke-width="1" fill="none"><line x1="5.5" y1="3" x2="5.5" y2="17"/><line x1="4" y1="15.5" x2="18" y2="15.5"/><polyline points="6,7 10,12 16,9"/><line x1="15.5" y1="4" x2="15.5" y2="15" stroke-dasharray="1.5,1.5"/><line x1="6" y1="10.5" x2="16" y2="10.5" stroke-dasharray="1.5,1.5"/></g><g fill="#707070" font-size="5" font-family="Liberation Sans"><text x="0" y="9">Y</text><text x="13" y="4">X</text><text x="7" y="5">0</text><text x="0" y="18">0</text></g></svg>
<div class="a" style="left:710.5px;top:425.00px;font-size:13px;line-height:16px;letter-spacing:0.25px;color:#000;white-space:nowrap">Coord</div>
<div class="dot" style="left:3px;top:464px"></div><div class="dot" style="left:7px;top:464px"></div>
<div class="dot" style="left:3px;top:469px"></div><div class="dot" style="left:7px;top:469px"></div>
<div class="dot" style="left:3px;top:474px"></div><div class="dot" style="left:7px;top:474px"></div>
<div class="dot" style="left:3px;top:479px"></div><div class="dot" style="left:7px;top:479px"></div>
<div class="dot" style="left:3px;top:484px"></div><div class="dot" style="left:7px;top:484px"></div>
<div class="dot" style="left:3px;top:489px"></div><div class="dot" style="left:7px;top:489px"></div>
<div class="dot" style="left:3px;top:494px"></div><div class="dot" style="left:7px;top:494px"></div>
<div class="dot" style="left:3px;top:499px"></div><div class="dot" style="left:7px;top:499px"></div>
<div class="dot" style="left:3px;top:504px"></div><div class="dot" style="left:7px;top:504px"></div>
<div class="dot" style="left:3px;top:509px"></div><div class="dot" style="left:7px;top:509px"></div>
<div class="dot" style="left:3px;top:514px"></div><div class="dot" style="left:7px;top:514px"></div>
<div class="dot" style="left:3px;top:519px"></div><div class="dot" style="left:7px;top:519px"></div>
<div class="dot" style="left:3px;top:524px"></div><div class="dot" style="left:7px;top:524px"></div>
<div class="dot" style="left:3px;top:529px"></div><div class="dot" style="left:7px;top:529px"></div>
<div class="dot" style="left:3px;top:534px"></div><div class="dot" style="left:7px;top:534px"></div>
<div class="dot" style="left:3px;top:539px"></div><div class="dot" style="left:7px;top:539px"></div>
<div class="dot" style="left:3px;top:544px"></div><div class="dot" style="left:7px;top:544px"></div>
<div class="dot" style="left:3px;top:549px"></div><div class="dot" style="left:7px;top:549px"></div>
<div class="dot" style="left:3px;top:554px"></div><div class="dot" style="left:7px;top:554px"></div>
<div class="dot" style="left:3px;top:559px"></div><div class="dot" style="left:7px;top:559px"></div>
<div class="dot" style="left:3px;top:564px"></div><div class="dot" style="left:7px;top:564px"></div>
<div class="dot" style="left:3px;top:569px"></div><div class="dot" style="left:7px;top:569px"></div>
<div class="dot" style="left:3px;top:574px"></div><div class="dot" style="left:7px;top:574px"></div>
<div class="dot" style="left:3px;top:579px"></div><div class="dot" style="left:7px;top:579px"></div>
<div class="dot" style="left:3px;top:584px"></div><div class="dot" style="left:7px;top:584px"></div>
<div class="dot" style="left:3px;top:589px"></div><div class="dot" style="left:7px;top:589px"></div>
<div class="dot" style="left:3px;top:594px"></div><div class="dot" style="left:7px;top:594px"></div>
<div class="dot" style="left:3px;top:599px"></div><div class="dot" style="left:7px;top:599px"></div>
<div class="dot" style="left:3px;top:604px"></div><div class="dot" style="left:7px;top:604px"></div>
<div class="dot" style="left:3px;top:609px"></div><div class="dot" style="left:7px;top:609px"></div>
<div class="dot" style="left:3px;top:614px"></div><div class="dot" style="left:7px;top:614px"></div>
<div class="dot" style="left:3px;top:619px"></div><div class="dot" style="left:7px;top:619px"></div>
<div class="dot" style="left:3px;top:624px"></div><div class="dot" style="left:7px;top:624px"></div>
<div class="dot" style="left:3px;top:629px"></div><div class="dot" style="left:7px;top:629px"></div>
<div class="dot" style="left:3px;top:634px"></div><div class="dot" style="left:7px;top:634px"></div>
<div class="dot" style="left:3px;top:639px"></div><div class="dot" style="left:7px;top:639px"></div>
<div class="dot" style="left:3px;top:644px"></div><div class="dot" style="left:7px;top:644px"></div>
<div class="dot" style="left:3px;top:649px"></div><div class="dot" style="left:7px;top:649px"></div>
<div class="dot" style="left:3px;top:654px"></div><div class="dot" style="left:7px;top:654px"></div>
<div class="dot" style="left:3px;top:659px"></div><div class="dot" style="left:7px;top:659px"></div>
<div class="dot" style="left:3px;top:664px"></div><div class="dot" style="left:7px;top:664px"></div>
<div class="dot" style="left:3px;top:669px"></div><div class="dot" style="left:7px;top:669px"></div>
<div class="dot" style="left:3px;top:674px"></div><div class="dot" style="left:7px;top:674px"></div>
<div class="dot" style="left:3px;top:679px"></div><div class="dot" style="left:7px;top:679px"></div>
<div class="dot" style="left:3px;top:684px"></div><div class="dot" style="left:7px;top:684px"></div>
<div class="dot" style="left:3px;top:689px"></div><div class="dot" style="left:7px;top:689px"></div>
<svg class="a" style="left:2px;top:450px" width="11" height="10"><rect x="0.5" y="0.5" width="10" height="9" rx="1" fill="#e09a9a" stroke="#5a1a2a"/><path d="M2,2 L9,8.5 M9,2 L2,8.5" stroke="#fff" stroke-width="1.8"/></svg>
<div class="a" style="left:13px;top:470px;width:936px;height:228px;border:1px solid #8e8e9c;background:#fff"></div>
<div class="a" style="left:0;top:699px;width:952px;height:1px;background:#a4a4a4"></div><div class="a" style="left:0;top:700px;width:952px;height:1px;background:#fafafa"></div>
<div class="a" style="left:0;top:0;width:1px;height:419px;background:#fafafa"></div><div class="a" style="left:951px;top:0;width:1px;height:419px;background:#fafafa"></div>
<div class="a" style="left:155px;top:451px;width:39px;height:19px;border:1px solid #8e8e9c;border-left:none;border-bottom:none;background:linear-gradient(#f6f6f6,#ececec 45%,#dcdcdc 55%,#d6d6d6)"></div>
<div class="a" style="left:160.3px;top:453.64px;font-size:12px;line-height:16px;letter-spacing:0.3px;color:#000;white-space:nowrap">BQ</div>
<div class="a" style="left:13px;top:449px;width:143px;height:23px;border:1px solid #9a9aa8;border-bottom:none;background:#fff"></div>
<div class="a" style="left:21.3px;top:452.24px;font-size:12px;line-height:16px;letter-spacing:0.14px;color:#000;white-space:nowrap">General Quantity Items</div>
<div class="btn" style="left:752px;top:449px;width:159px;height:21px;background:linear-gradient(#f8f8f8,#efefef);border-color:#a8a8a8;box-shadow:none"></div>
<div class="a" style="left:776px;top:452.24px;font-size:12px;line-height:16px;letter-spacing:-0.1px;color:#8c8c8c;white-space:nowrap">Export BQ to EXCEL</div>
<div class="a" style="left:17px;top:474px;width:930px;height:221px;border:1px solid #a4a4b0;background:#fff"></div>
<div class="th" style="left:19px;top:476px;width:80px;height:18px"></div>
<div class="th" style="left:100px;top:476px;width:225px;height:18px;background:linear-gradient(#f8d89e,#f3ca7c 50%,#efbb58)"></div>
<div class="th" style="left:326px;top:476px;width:132px;height:18px"></div>
<div class="th" style="left:459px;top:476px;width:485px;height:18px"></div>
<div class="a" style="left:34px;top:478.04px;font-size:12px;line-height:16px;letter-spacing:0.2px;color:#000;white-space:nowrap">Element</div>
<div class="a" style="left:150.5px;top:478.04px;font-size:12px;line-height:16px;letter-spacing:0.15px;color:#6e0a3a;white-space:nowrap">Project Quantity Name</div>
<div class="a" style="left:368.4px;top:478.04px;font-size:12px;line-height:16px;letter-spacing:0.19px;color:#000;white-space:nowrap">Quantity</div>
<div class="a" style="left:650px;top:478.04px;font-size:12px;line-height:16px;letter-spacing:-0.22px;color:#000;white-space:nowrap">Calculation Formula</div>
<div class="a" style="left:99px;top:476px;width:1px;height:168px;background:#c6c6c6"></div>
<div class="a" style="left:325px;top:476px;width:1px;height:168px;background:#c6c6c6"></div>
<div class="a" style="left:458px;top:476px;width:1px;height:168px;background:#c6c6c6"></div>
<div class="a" style="left:944px;top:476px;width:1px;height:168px;background:#c6c6c6"></div>
<div class="a" style="left:19px;top:494px;width:925px;height:1px;background:#c0c0c0"></div>
<div class="a" style="left:19px;top:495px;width:80px;height:149px;background:#ffd48a"></div>
<div class="a" style="left:19px;top:644px;width:80px;height:1px;background:#c6c6c6"></div>
<div class="a" style="left:100px;top:495px;width:225px;height:18px;background:#ddeeff"></div>
<div class="a" style="left:21.6px;top:561.44px;font-size:12px;line-height:16px;letter-spacing:-0.09px;color:#6e0a3a;white-space:nowrap">SAD 600x250</div>
<div class="a" style="left:99px;top:513px;width:845px;height:1px;background:#c6c6c6"></div>
<div class="a" style="left:101.4px;top:495px;width:220px;height:18px;overflow:hidden"><div class="a" style="left:1px;top:1.24px;font-size:12px;line-height:16px;letter-spacing:0.2px;color:#000;white-space:nowrap">Length(m)</div></div>
<div class="a" style="left:327.2px;top:495px;width:130px;height:18px;overflow:hidden"><div class="a" style="left:1px;top:1.24px;font-size:12px;line-height:16px;letter-spacing:0.2px;color:#000;white-space:nowrap">2.55</div></div>
<div class="a" style="left:459.8px;top:495px;width:480px;height:18px;overflow:hidden"><div class="a" style="left:1px;top:1.24px;font-size:12px;line-height:16px;letter-spacing:0.6px;color:#000;white-space:nowrap">(2.5475)*1:(L)*times</div></div>
<div class="a" style="left:99px;top:532px;width:845px;height:1px;background:#c6c6c6"></div>
<div class="a" style="left:101.4px;top:514px;width:220px;height:18px;overflow:hidden"><div class="a" style="left:1px;top:1.24px;font-size:12px;line-height:16px;letter-spacing:0.2px;color:#000;white-space:nowrap">Expanded area(m2)</div></div>
<div class="a" style="left:327.2px;top:514px;width:130px;height:18px;overflow:hidden"><div class="a" style="left:1px;top:1.24px;font-size:12px;line-height:16px;letter-spacing:0.2px;color:#000;white-space:nowrap">4.33</div></div>
<div class="a" style="left:459.8px;top:514px;width:480px;height:18px;overflow:hidden"><div class="a" style="left:1px;top:1.24px;font-size:12px;line-height:16px;letter-spacing:0.55px;color:#000;white-space:nowrap">(1.7000*2.5475)*1:(Perimeter*L)*times</div></div>
<div class="a" style="left:99px;top:551px;width:845px;height:1px;background:#c6c6c6"></div>
<div class="a" style="left:101.4px;top:533px;width:220px;height:18px;overflow:hidden"><div class="a" style="left:1px;top:1.24px;font-size:12px;line-height:16px;letter-spacing:0.2px;color:#000;white-space:nowrap">Insulating length(m)</div></div>
<div class="a" style="left:327.2px;top:533px;width:130px;height:18px;overflow:hidden"><div class="a" style="left:1px;top:1.24px;font-size:12px;line-height:16px;letter-spacing:0.2px;color:#000;white-space:nowrap">2.55</div></div>
<div class="a" style="left:459.8px;top:533px;width:480px;height:18px;overflow:hidden"><div class="a" style="left:1px;top:1.24px;font-size:12px;line-height:16px;letter-spacing:0.6px;color:#000;white-space:nowrap">(2.5475)*1:(L)*times</div></div>
<div class="a" style="left:99px;top:569px;width:845px;height:1px;background:#c6c6c6"></div>
<div class="a" style="left:101.4px;top:552px;width:220px;height:17px;overflow:hidden"><div class="a" style="left:1px;top:1.24px;font-size:12px;line-height:16px;letter-spacing:0.18px;color:#000;white-space:nowrap">Insulating area(m2)</div></div>
<div class="a" style="left:327.2px;top:552px;width:130px;height:17px;overflow:hidden"><div class="a" style="left:1px;top:1.24px;font-size:12px;line-height:16px;letter-spacing:0.2px;color:#000;white-space:nowrap">4.53</div></div>
<div class="a" style="left:459.8px;top:552px;width:480px;height:17px;overflow:hidden"><div class="a" style="left:1px;top:1.24px;font-size:12px;line-height:16px;letter-spacing:0.55px;color:#000;white-space:nowrap">(1.7800*2.5475)*1:(Perimeter*L)*times</div></div>
<div class="a" style="left:99px;top:588px;width:845px;height:1px;background:#c6c6c6"></div>
<div class="a" style="left:101.4px;top:570px;width:220px;height:18px;overflow:hidden"><div class="a" style="left:1px;top:1.24px;font-size:12px;line-height:16px;letter-spacing:-0.06px;color:#000;white-space:nowrap">Fire-resistance area(m2)</div></div>
<div class="a" style="left:327.2px;top:570px;width:130px;height:18px;overflow:hidden"><div class="a" style="left:1px;top:1.24px;font-size:12px;line-height:16px;letter-spacing:0.2px;color:#000;white-space:nowrap">0</div></div>
<div class="a" style="left:459.8px;top:570px;width:480px;height:18px;overflow:hidden"><div class="a" style="left:1px;top:1.24px;font-size:12px;line-height:16px;letter-spacing:0.2px;color:#000;white-space:nowrap">0</div></div>
<div class="a" style="left:99px;top:606px;width:845px;height:1px;background:#c6c6c6"></div>
<div class="a" style="left:101.4px;top:589px;width:220px;height:17px;overflow:hidden"><div class="a" style="left:1px;top:1.24px;font-size:12px;line-height:16px;letter-spacing:0.14px;color:#000;white-space:nowrap">Protective layer area(m2)</div></div>
<div class="a" style="left:327.2px;top:589px;width:130px;height:17px;overflow:hidden"><div class="a" style="left:1px;top:1.24px;font-size:12px;line-height:16px;letter-spacing:0.2px;color:#000;white-space:nowrap">4.62</div></div>
<div class="a" style="left:459.8px;top:589px;width:480px;height:17px;overflow:hidden"><div class="a" style="left:1px;top:1.24px;font-size:12px;line-height:16px;letter-spacing:0.55px;color:#000;white-space:nowrap">(1.8128*2.5475)*1:(Perimeter*L)*times</div></div>
<div class="a" style="left:99px;top:625px;width:845px;height:1px;background:#c6c6c6"></div>
<div class="a" style="left:101.4px;top:607px;width:220px;height:18px;overflow:hidden"><div class="a" style="left:1px;top:1.24px;font-size:12px;line-height:16px;letter-spacing:0.31px;color:#000;white-space:nowrap">Support quantity(piece)</div></div>
<div class="a" style="left:327.2px;top:607px;width:130px;height:18px;overflow:hidden"><div class="a" style="left:1px;top:1.24px;font-size:12px;line-height:16px;letter-spacing:0.2px;color:#000;white-space:nowrap">0</div></div>
<div class="a" style="left:459.8px;top:607px;width:480px;height:18px;overflow:hidden"><div class="a" style="left:1px;top:1.24px;font-size:12px;line-height:16px;letter-spacing:0.2px;color:#000;white-space:nowrap">0</div></div>
<div class="a" style="left:99px;top:644px;width:845px;height:1px;background:#c6c6c6"></div>
<div class="a" style="left:101.4px;top:626px;width:220px;height:18px;overflow:hidden"><div class="a" style="left:1px;top:1.24px;font-size:12px;line-height:16px;letter-spacing:0.36px;color:#000;white-space:nowrap">Weight of Support(Kg)</div></div>
<div class="a" style="left:327.2px;top:626px;width:130px;height:18px;overflow:hidden"><div class="a" style="left:1px;top:1.24px;font-size:12px;line-height:16px;letter-spacing:0.2px;color:#000;white-space:nowrap">0</div></div>
<div class="a" style="left:459.8px;top:626px;width:480px;height:18px;overflow:hidden"><div class="a" style="left:1px;top:1.24px;font-size:12px;line-height:16px;letter-spacing:0.2px;color:#000;white-space:nowrap">0</div></div>
</body></html>
